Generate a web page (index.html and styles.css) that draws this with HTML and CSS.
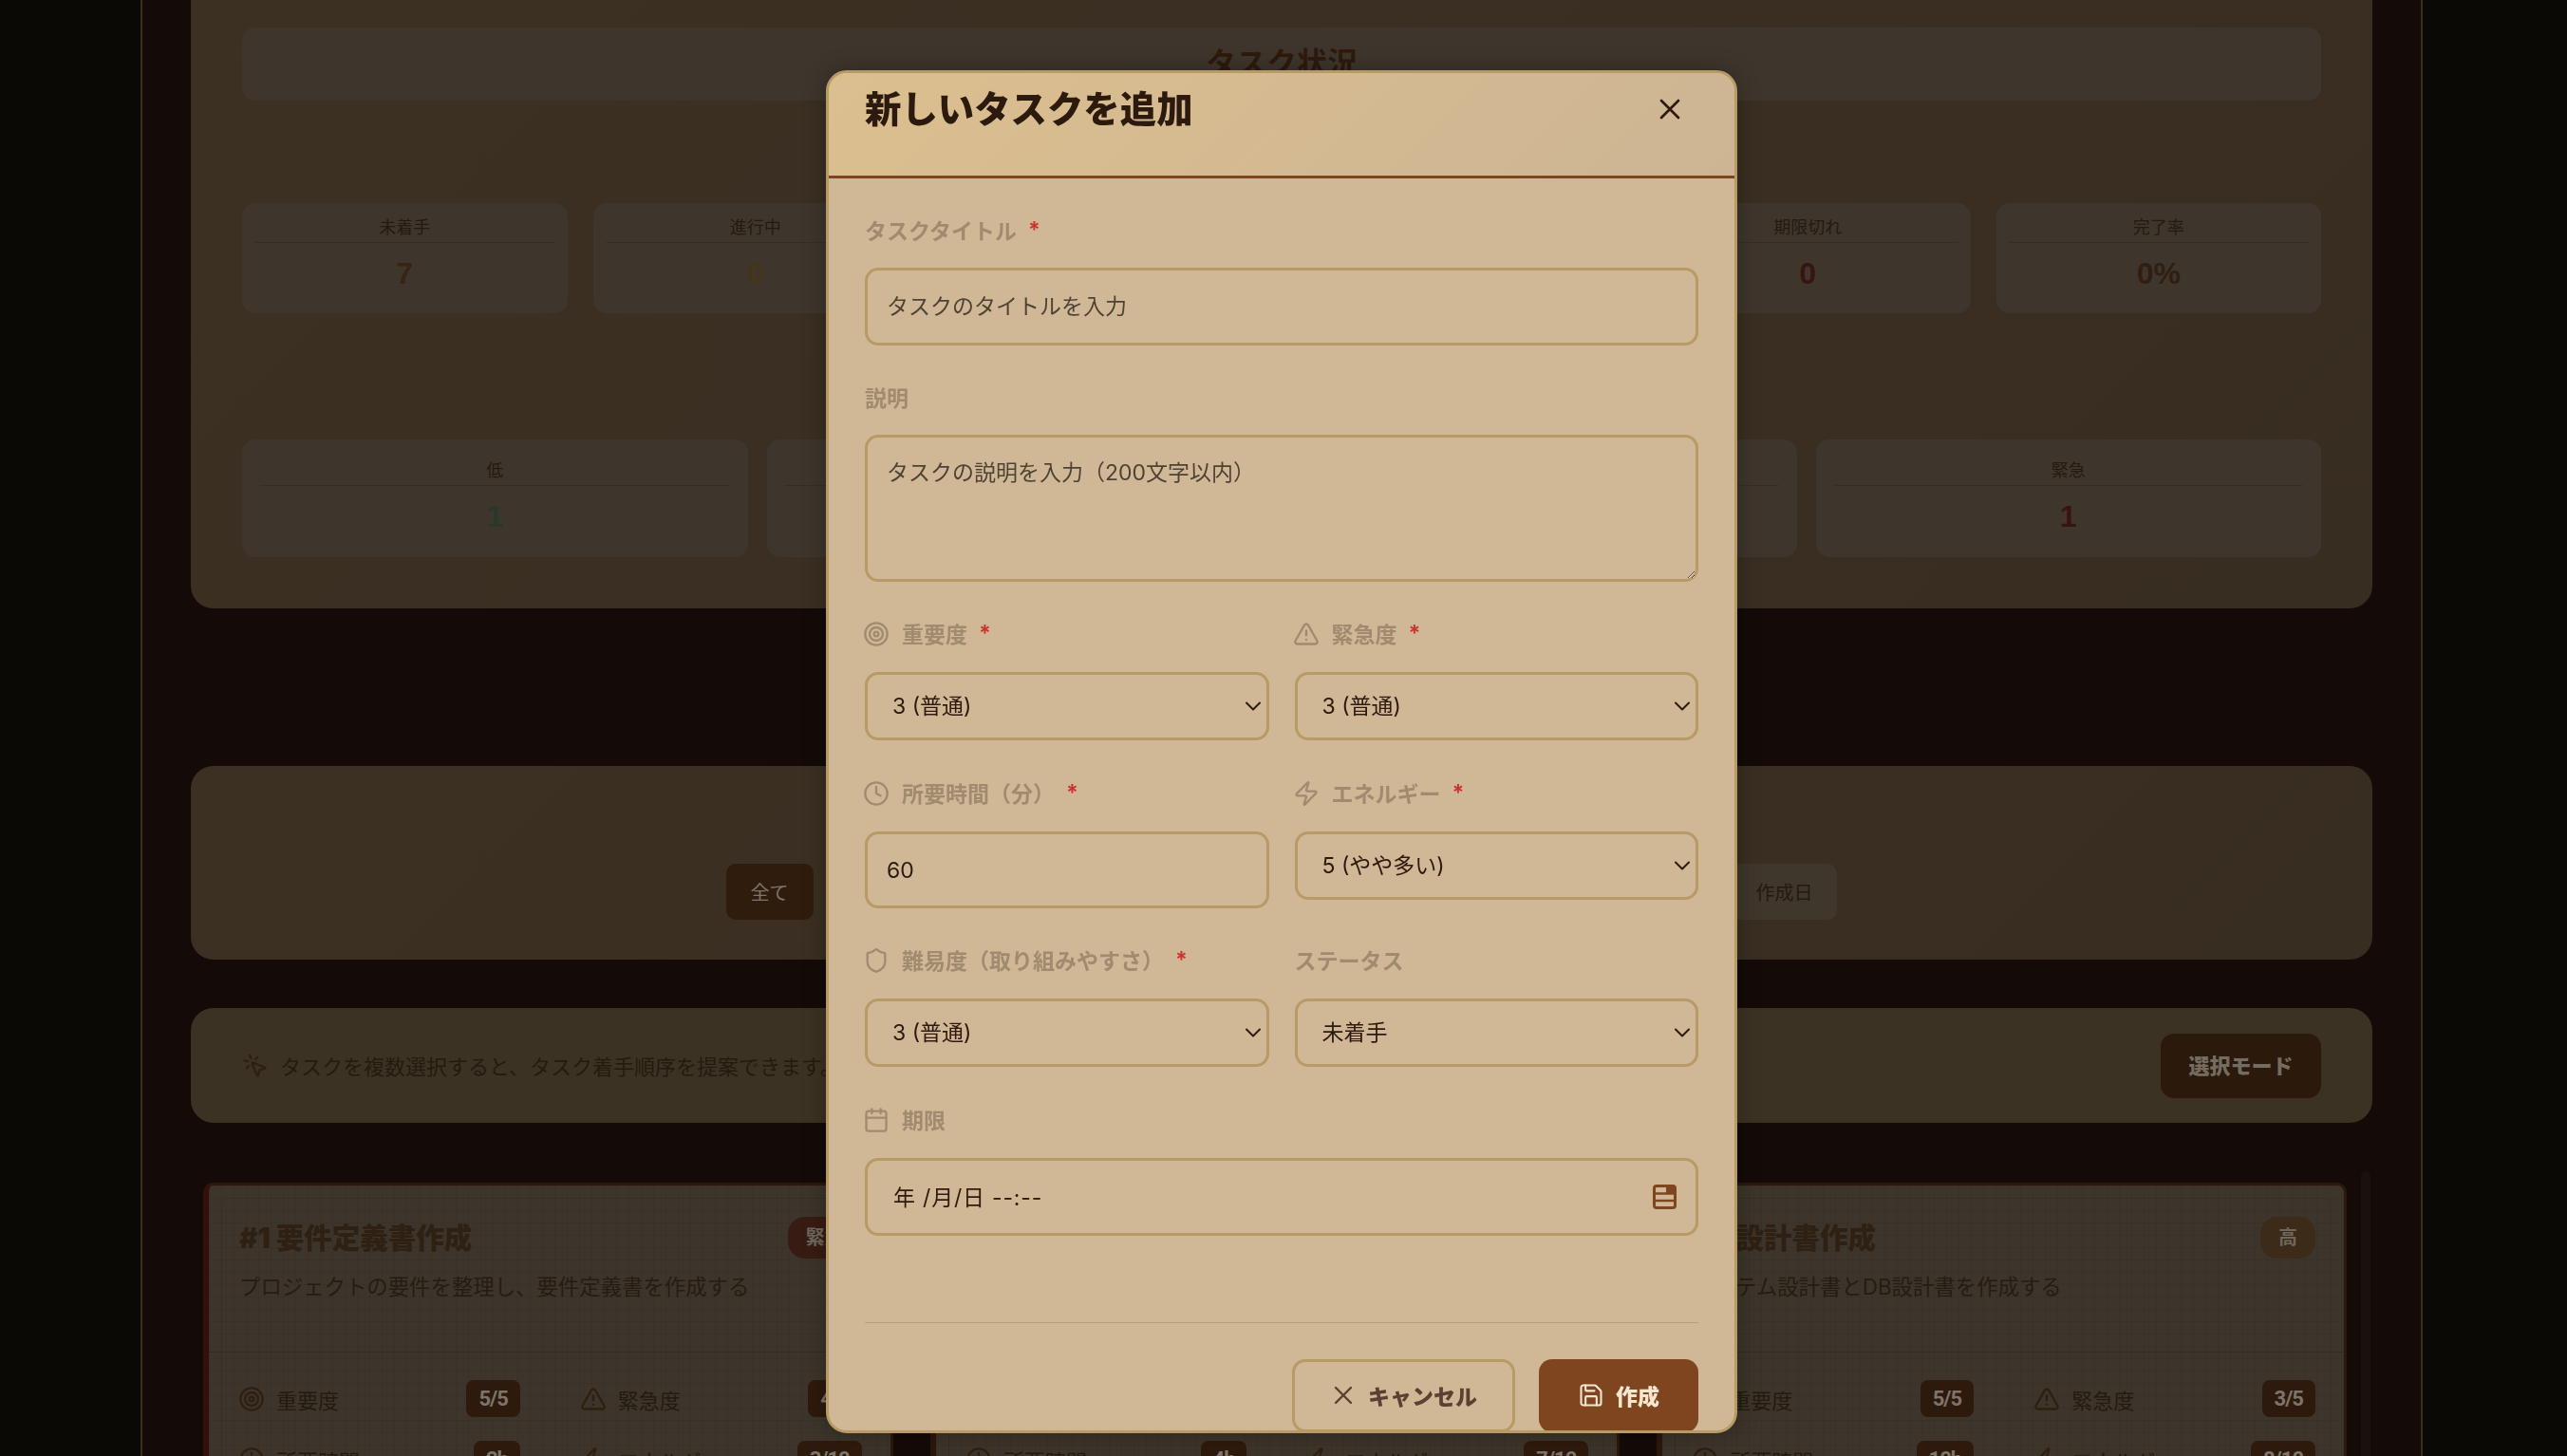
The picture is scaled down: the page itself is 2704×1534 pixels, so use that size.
FILE: index.html
```html
<!DOCTYPE html>
<html lang="ja">
<head>
  <meta charset="UTF-8" />
  <meta name="viewport" content="width=device-width, initial-scale=1" />
  <title>タスク管理</title>
  <link rel="stylesheet" href="styles.css">
</head>
<body>
  <!-- Icon sprite -->
  <svg class="sprite" xmlns="http://www.w3.org/2000/svg">
    <symbol id="i-target" viewBox="0 0 24 24"><circle cx="12" cy="12" r="10"/><circle cx="12" cy="12" r="6"/><circle cx="12" cy="12" r="2"/></symbol>
    <symbol id="i-alert" viewBox="0 0 24 24"><path d="m21.73 18-8-14a2 2 0 0 0-3.48 0l-8 14A2 2 0 0 0 4 21h16a2 2 0 0 0 1.73-3"/><path d="M12 9v4"/><path d="M12 17h.01"/></symbol>
    <symbol id="i-clock" viewBox="0 0 24 24"><circle cx="12" cy="12" r="10"/><polyline points="12 6 12 12 16 14"/></symbol>
    <symbol id="i-zap" viewBox="0 0 24 24"><path d="M4 14a1 1 0 0 1-.78-1.63l9.9-10.2a.5.5 0 0 1 .86.46l-1.92 6.02A1 1 0 0 0 13 10h7a1 1 0 0 1 .78 1.63l-9.9 10.2a.5.5 0 0 1-.86-.46l1.92-6.02A1 1 0 0 0 11 14z"/></symbol>
    <symbol id="i-shield" viewBox="0 0 24 24"><path d="M20 13c0 5-3.5 7.5-7.66 8.95a1 1 0 0 1-.67-.01C7.5 20.5 4 18 4 13V6a1 1 0 0 1 1-1c2 0 4.5-1.2 6.24-2.72a1.17 1.17 0 0 1 1.52 0C14.51 3.81 17 5 19 5a1 1 0 0 1 1 1z"/></symbol>
    <symbol id="i-calendar" viewBox="0 0 24 24"><path d="M8 2v4"/><path d="M16 2v4"/><rect x="3" y="4" width="18" height="18" rx="2"/><path d="M3 10h18"/></symbol>
    <symbol id="i-x" viewBox="0 0 24 24"><path d="M18 6 6 18"/><path d="m6 6 12 12"/></symbol>
    <symbol id="i-save" viewBox="0 0 24 24"><path d="M15.2 3a2 2 0 0 1 1.4.6l3.8 3.8a2 2 0 0 1 .6 1.4V19a2 2 0 0 1-2 2H5a2 2 0 0 1-2-2V5a2 2 0 0 1 2-2z"/><path d="M17 21v-7a1 1 0 0 0-1-1H8a1 1 0 0 0-1 1v7"/><path d="M7 3v4a1 1 0 0 0 1 1h7"/></symbol>
    <symbol id="i-click" viewBox="0 0 24 24"><path d="M14 4.1 12 6"/><path d="m5.1 8-2.9-.8"/><path d="m6 12-1.9 2"/><path d="M7.2 2.2 8 5.1"/><path d="M9.037 9.69a.498.498 0 0 1 .653-.653l11 4.5a.5.5 0 0 1-.074.949l-4.349 1.041a1 1 0 0 0-.74.739l-1.04 4.35a.5.5 0 0 1-.95.074z"/></symbol>
    <symbol id="i-chevron" viewBox="0 0 24 24"><path d="m6 9 6 6 6-6"/></symbol>
  </svg>

  <div class="shell">
    <section class="panel status-panel">
      <div class="status-title"><h2>タスク状況</h2></div>

      <div class="stat-row stat-row-six">
        <div class="stat"><div class="stat-label">未着手</div><div class="stat-value val-todo">7</div></div>
        <div class="stat"><div class="stat-label">進行中</div><div class="stat-value val-doing">0</div></div>
        <div class="stat"><div class="stat-label">レビュー</div><div class="stat-value val-todo">0</div></div>
        <div class="stat"><div class="stat-label">完了</div><div class="stat-value val-low">0</div></div>
        <div class="stat"><div class="stat-label">期限切れ</div><div class="stat-value val-urgent">0</div></div>
        <div class="stat"><div class="stat-label">完了率</div><div class="stat-value val-rate">0%</div></div>
      </div>

      <div class="stat-row stat-row-four">
        <div class="stat"><div class="stat-label">低</div><div class="stat-value val-low">1</div></div>
        <div class="stat"><div class="stat-label">中</div><div class="stat-value val-doing">3</div></div>
        <div class="stat"><div class="stat-label">高</div><div class="stat-value val-todo">2</div></div>
        <div class="stat"><div class="stat-label">緊急</div><div class="stat-value val-urgent">1</div></div>
      </div>
    </section>

    <section class="panel sort-panel">
      <div class="sort-row">
        <button class="sort-btn active">全て</button>
        <button class="sort-btn">重要度</button>
        <button class="sort-btn">緊急度</button>
        <button class="sort-btn">所要時間</button>
        <button class="sort-btn">エネルギー</button>
        <button class="sort-btn">難易度</button>
        <button class="sort-btn">期限</button>
        <button class="sort-btn">作成日</button>
      </div>
    </section>

    <section class="panel hint-panel">
      <svg class="icon hint-icon"><use href="#i-click"/></svg>
      <span class="hint-text">タスクを複数選択すると、タスク着手順序を提案できます。</span>
      <button class="mode-btn">選択モード</button>
    </section>

    <div class="task-area">
      <div class="task-grid">
        <article class="task task-urgent">
          <div class="task-head">
            <h3>#1 要件定義書作成</h3>
            <span class="level level-urgent">緊急</span>
          </div>
          <p class="task-desc">プロジェクトの要件を整理し、要件定義書を作成する</p>
          <div class="metrics">
            <div class="metric"><svg class="icon"><use href="#i-target"/></svg><span>重要度</span><b>5/5</b></div>
            <div class="metric"><svg class="icon"><use href="#i-alert"/></svg><span>緊急度</span><b>4/5</b></div>
            <div class="metric"><svg class="icon"><use href="#i-clock"/></svg><span>所要時間</span><b>2h</b></div>
            <div class="metric"><svg class="icon"><use href="#i-zap"/></svg><span>エネルギー</span><b>3/10</b></div>
          </div>
        </article>

        <article class="task">
          <div class="task-head">
            <h3>#2 技術調査</h3>
            <span class="level">高</span>
          </div>
          <p class="task-desc">使用する技術スタックを調査し、比較する</p>
          <div class="metrics">
            <div class="metric"><svg class="icon"><use href="#i-target"/></svg><span>重要度</span><b>4/5</b></div>
            <div class="metric"><svg class="icon"><use href="#i-alert"/></svg><span>緊急度</span><b>3/5</b></div>
            <div class="metric"><svg class="icon"><use href="#i-clock"/></svg><span>所要時間</span><b>4h</b></div>
            <div class="metric"><svg class="icon"><use href="#i-zap"/></svg><span>エネルギー</span><b>7/10</b></div>
          </div>
        </article>

        <article class="task">
          <div class="task-head">
            <h3>#3 設計書作成</h3>
            <span class="level">高</span>
          </div>
          <p class="task-desc">システム設計書とDB設計書を作成する</p>
          <div class="metrics">
            <div class="metric"><svg class="icon"><use href="#i-target"/></svg><span>重要度</span><b>5/5</b></div>
            <div class="metric"><svg class="icon"><use href="#i-alert"/></svg><span>緊急度</span><b>3/5</b></div>
            <div class="metric"><svg class="icon"><use href="#i-clock"/></svg><span>所要時間</span><b>10h</b></div>
            <div class="metric"><svg class="icon"><use href="#i-zap"/></svg><span>エネルギー</span><b>8/10</b></div>
          </div>
        </article>
      </div>
      <div class="task-scroll"></div>
    </div>
  </div>

  <!-- Add task modal -->
  <div class="overlay">
    <form class="modal">
      <header class="modal-head">
        <h2>新しいタスクを追加</h2>
        <svg class="icon modal-close"><use href="#i-x"/></svg>
      </header>

      <div class="modal-body">
        <div class="field">
          <label class="field-label">タスクタイトル<em>*</em></label>
          <input class="control control-tall" type="text" placeholder="タスクのタイトルを入力" />
        </div>

        <div class="field">
          <label class="field-label">説明</label>
          <textarea class="control control-area" placeholder="タスクの説明を入力（200文字以内）"></textarea>
        </div>

        <div class="field-grid">
          <div class="field">
            <label class="field-label"><svg class="icon"><use href="#i-target"/></svg>重要度<em>*</em></label>
            <div class="select-wrap">
              <select class="control"><option>3 (普通)</option></select>
              <svg class="icon select-arrow"><use href="#i-chevron"/></svg>
            </div>
          </div>
          <div class="field">
            <label class="field-label"><svg class="icon"><use href="#i-alert"/></svg>緊急度<em>*</em></label>
            <div class="select-wrap">
              <select class="control"><option>3 (普通)</option></select>
              <svg class="icon select-arrow"><use href="#i-chevron"/></svg>
            </div>
          </div>

          <div class="field">
            <label class="field-label"><svg class="icon"><use href="#i-clock"/></svg>所要時間（分）<em>*</em></label>
            <input class="control control-tall control-number" type="text" value="60" />
          </div>
          <div class="field">
            <label class="field-label"><svg class="icon"><use href="#i-zap"/></svg>エネルギー<em>*</em></label>
            <div class="select-wrap">
              <select class="control"><option>5 (やや多い)</option></select>
              <svg class="icon select-arrow"><use href="#i-chevron"/></svg>
            </div>
          </div>

          <div class="field">
            <label class="field-label"><svg class="icon"><use href="#i-shield"/></svg>難易度（取り組みやすさ）<em>*</em></label>
            <div class="select-wrap">
              <select class="control"><option>3 (普通)</option></select>
              <svg class="icon select-arrow"><use href="#i-chevron"/></svg>
            </div>
          </div>
          <div class="field">
            <label class="field-label">ステータス</label>
            <div class="select-wrap">
              <select class="control"><option>未着手</option></select>
              <svg class="icon select-arrow"><use href="#i-chevron"/></svg>
            </div>
          </div>
        </div>

        <div class="field field-due">
          <label class="field-label"><svg class="icon"><use href="#i-calendar"/></svg>期限</label>
          <div class="date-wrap">
            <input class="control control-tall control-date" type="text" value="年 /月/日 --:--" />
            <svg class="date-icon" viewBox="0 0 25 26">
              <rect x="1.5" y="1.5" width="22" height="23" rx="2.5" fill="none" stroke="currentColor" stroke-width="3"/>
              <rect x="14" y="2" width="9" height="7" fill="currentColor"/>
              <path d="M2 9.5h21M2 17h21" stroke="currentColor" stroke-width="2.4"/>
            </svg>
          </div>
        </div>

        <div class="modal-actions">
          <button class="btn btn-cancel" type="button"><svg class="icon"><use href="#i-x"/></svg>キャンセル</button>
          <button class="btn btn-save" type="button"><svg class="icon"><use href="#i-save"/></svg>作成</button>
        </div>
      </div>
    </form>
  </div>
</body>
</html>
```

FILE: styles.css
```css
* {
  box-sizing: border-box;
}
html, body {
  height: 100%;
}
body {
  margin: 0;
  overflow: hidden;
  background: #0a0905;
  color: #241a10;
  font-family: Inter, "Noto Sans CJK JP", sans-serif;
}
h2, h3, p {
  margin: 0;
}
button {
  font-family: inherit;
  border: none;
}
.sprite {
  display: none;
}
.icon {
  width: 28px;
  height: 28px;
  flex-shrink: 0;
  fill: none;
  stroke: currentColor;
  stroke-width: 2;
  stroke-linecap: round;
  stroke-linejoin: round;
}

/* --- PAGE BEHIND THE MODAL --- */
.shell {
  width: 2404px;
  margin-left: 148px;
  min-height: 100%;
  padding: 0 51px;
  background: #140b08;
  border-left: 2px solid #3a2f1c;
  border-right: 2px solid #3a2f1c;
}
.panel {
  background: linear-gradient(135deg, #3b3022, #382d21);
  border-radius: 24px;
  padding-left: 54px;
  padding-right: 54px;
}
.status-panel {
  height: 641px;
  padding-top: 29px;
  border-radius: 0 0 24px 24px;
}
.status-title {
  height: 77px;
  background: #3e362d;
  border-radius: 14px;
  text-align: center;
  overflow: hidden;
}
.status-title h2 {
  font-size: 32px;
  line-height: 76px;
  color: #2f1a0c;
}
.stat-row {
  display: grid;
  text-align: center;
}
.stat-row-six {
  grid-template-columns: repeat(6, 1fr);
  gap: 27px;
  margin-top: 108px;
}
.stat-row-four {
  grid-template-columns: repeat(4, 1fr);
  gap: 20px;
  margin-top: 133px;
}
.stat {
  background: #3e362d;
  border-radius: 14px;
  padding: 15px 13px 22px;
}
.stat-row-four .stat {
  padding: 22px 19px 23px;
}
.stat-label {
  font-size: 18px;
  line-height: 22px;
  padding-bottom: 4px;
  color: #241a10;
  border-bottom: 1px solid rgba(0, 0, 0, 0.14);
}
.stat-value {
  margin-top: 12px;
  font-family: "Liberation Sans", sans-serif;
  font-size: 32px;
  font-weight: bold;
  line-height: 40px;
}
.val-todo { color: #3a2314; }
.val-doing { color: #43351b; }
.val-low { color: #2a372c; }
.val-urgent { color: #38140f; }
.val-rate { color: #301f11; }

.sort-panel {
  height: 204px;
  margin-top: 166px;
  padding-top: 103px;
}
.sort-row {
  display: flex;
  justify-content: space-between;
  width: 1171px;
  margin: 0 auto;
}
.sort-btn {
  height: 59px;
  padding: 0 26px;
  border-radius: 10px;
  background: #3f372c;
  color: #241a10;
  font-size: 20px;
}
.sort-btn.active {
  background: #2f1c0d;
  color: #7d7569;
}

.hint-panel {
  display: flex;
  align-items: center;
  gap: 12px;
  height: 121px;
  margin-top: 51px;
  background: #3c3223;
}
.hint-icon {
  color: #2e2010;
}
.hint-text {
  padding-bottom: 2px;
  font-size: 22px;
  color: #241a10;
}
.mode-btn {
  margin-left: auto;
  width: 169px;
  height: 68px;
  padding-bottom: 4px;
  border-radius: 14px;
  background: #2b190c;
  color: #746c60;
  font-size: 22px;
  font-weight: 900;
}

.task-area {
  display: flex;
  gap: 15px;
  margin-top: 51px;
  padding-left: 13px;
}
.task-grid {
  flex: 1;
  display: grid;
  grid-template-columns: repeat(3, 1fr);
  gap: 39px;
  margin-top: 12px;
}
.task-scroll {
  width: 10px;
  margin-right: 2px;
  height: 320px;
  background: #1a110c;
  border-radius: 5px;
}
.task {
  position: relative;
  height: 400px;
  padding-top: 33px;
  border: 3px solid #2c170c;
  border-left-width: 6px;
  border-radius: 10px;
  background-color: #3d352b;
  background-image:
    linear-gradient(rgba(0, 0, 0, 0.06) 1px, transparent 1px),
    linear-gradient(90deg, rgba(0, 0, 0, 0.06) 1px, transparent 1px);
  background-size: 13px 13px;
}
/* faint inner frame */
.task::before {
  content: "";
  position: absolute;
  inset: 13px;
  border: 1px solid rgba(0, 0, 0, 0.06);
  border-radius: 8px;
}
.task-urgent {
  border-left-color: #360f0a;
}
.task-head {
  display: flex;
  justify-content: space-between;
  align-items: center;
  padding: 0 30px 0 32px;
}
.task-head h3 {
  font-size: 29.5px;
  font-weight: 900;
  line-height: 42px;
  color: #2e2012;
}
.level {
  height: 44px;
  padding: 0 19px;
  border-radius: 18px;
  background: #3b2b18;
  color: #6f675b;
  font-size: 20px;
  font-weight: bold;
  line-height: 44px;
}
.level-urgent {
  background: #381c14;
}
.task-desc {
  margin-top: 14px;
  padding: 0 32px 52px;
  font-size: 22.4px;
  line-height: 32px;
  color: #251c13;
  border-bottom: 1px solid rgba(0, 0, 0, 0.16);
}
.metrics {
  display: grid;
  grid-template-columns: 1fr 1fr;
  gap: 25px 65px;
  padding: 29px 30px 0 33px;
}
.metric {
  display: flex;
  align-items: center;
  gap: 12px;
  height: 39px;
  font-size: 22px;
  color: #241a10;
}
.metric .icon {
  margin-left: -2px;
  color: #2e2010;
}
.metric b {
  margin-left: auto;
  padding: 0 13px;
  border-radius: 8px;
  background: #2e1a0c;
  color: #7d7569;
  font-family: Roboto, sans-serif;
  letter-spacing: -1px;
  line-height: 39px;
}

/* --- MODAL --- */
.overlay {
  position: fixed;
  top: 74px;
  left: 870px;
}
.modal {
  width: 960px;
  height: 1436px;
  overflow: hidden;
  background: #d0b896;
  border: 3px solid #b89a66;
  border-radius: 22px;
  box-shadow: 0 0 24px rgba(0, 0, 0, 0.3);
}
.modal-head {
  display: flex;
  justify-content: space-between;
  align-items: flex-start;
  height: 111px;
  padding: 13px 50px 0 38px;
  background: linear-gradient(135deg, #dcbf8f, #cdb594);
  border-bottom: 3px solid #7f451f;
}
.modal-head h2 {
  font-size: 38.4px;
  font-weight: 900;
  line-height: 50px;
  color: #2c1a0e;
}
.modal-close {
  width: 36px;
  height: 36px;
  margin-top: 7px;
  stroke-width: 1.8;
  color: #2c1a0e;
}
.modal-body {
  padding: 39px 38px 0;
}
.field {
  margin-bottom: 39px;
  min-width: 0;
}
.field-grid {
  display: grid;
  grid-template-columns: 1fr 1fr;
  column-gap: 27px;
  align-items: start;
}
.field-grid .field:nth-child(-n+2), .field-grid .field:nth-child(n+5) {
  margin-bottom: 40px;
}
.field-label {
  display: flex;
  align-items: center;
  height: 32px;
  margin-bottom: 23px;
  padding-bottom: 2px;
  font-size: 23px;
  font-weight: bold;
  color: #a08b70;
}
.field-grid .field-label, .field-due .field-label {
  margin-bottom: 24px;
}
.field-label .icon {
  margin: 2px 13px 0 -2px;
}
.field-label em {
  margin-left: 12px;
  font-style: normal;
  font-size: 23px;
  color: #c9352e;
}
.control {
  display: block;
  width: 100%;
  height: 72px;
  padding: 0 26px;
  appearance: none;
  background: transparent;
  border: 3px solid #b89a66;
  border-radius: 14px;
  color: #2c1a0e;
  font-family: inherit;
  font-size: 23px;
}
.control::placeholder {
  color: #4f4235;
  opacity: 1;
}
.control-tall {
  height: 82px;
  padding: 0 20px;
}
.control-number {
  height: 81px;
}
.control-area {
  height: 155px;
  padding: 20px;
  line-height: 34px;
  resize: vertical;
}
.control-date {
  padding: 0 0 2px 27px;
  letter-spacing: 0.8px;
}
.select-wrap, .date-wrap {
  position: relative;
}
.select-arrow {
  position: absolute;
  top: 50%;
  right: 3px;
  width: 28px;
  height: 28px;
  margin-top: -14px;
  stroke-width: 1.7;
  color: #2c1a0e;
}
.date-icon {
  position: absolute;
  top: 28px;
  right: 23px;
  width: 25px;
  height: 26px;
  color: #7f451f;
}
.field-due {
  margin-bottom: 91px;
}
.modal-actions {
  display: flex;
  justify-content: flex-end;
  gap: 25px;
  padding-top: 38px;
  border-top: 1px solid #b89f7c;
}
.btn {
  display: flex;
  align-items: center;
  justify-content: center;
  height: 77px;
  padding-bottom: 2px;
  flex-shrink: 0;
  border-radius: 14px;
  font-size: 23px;
  font-weight: 900;
}
.btn .icon {
  stroke-width: 1.8;
}
.btn-cancel {
  width: 235px;
  gap: 10px;
  padding-right: 8px;
  background: transparent;
  border: 3px solid #b89a66;
  color: #5c4033;
}
.btn-cancel .icon {
  width: 32px;
  height: 32px;
}
.btn-save {
  width: 168px;
  gap: 12px;
  background: #7f451f;
  color: #f5e6d0;
}
```
